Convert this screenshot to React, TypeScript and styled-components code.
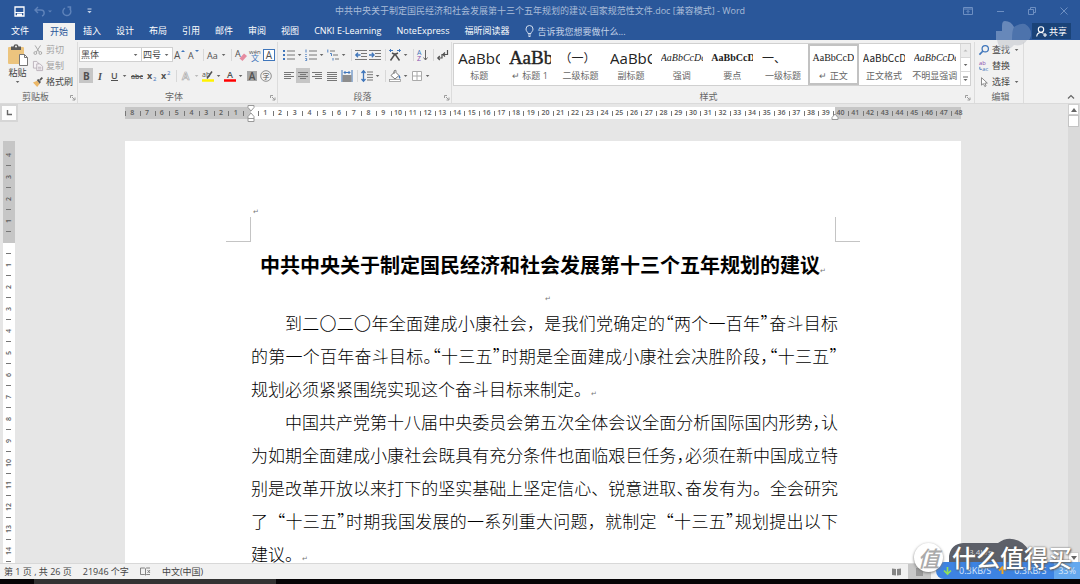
import React from "react";
import styled, { createGlobalStyle, css } from "styled-components";

const UI_FONT = `"Open Sans", "Noto Sans CJK SC", sans-serif`;
const BLUE = "#2a579a";
const INK = "#505050";

const GlobalStyle = createGlobalStyle`
  *, *::before, *::after { box-sizing: border-box; }
  html, body { margin: 0; height: 100%; }
  body { font-family: ${UI_FONT}; font-size: 9px; color: #444; background: #e6e6e6; overflow: hidden; }
  button, select, input { font: inherit; color: inherit; margin: 0; padding: 0; border: 0; background: none; border-radius: 0; }
  svg { display: block; flex: none; overflow: visible; }
`;

const Shell = styled.div`
  position: relative;
  display: flex;
  flex-direction: column;
  height: 100vh;
  overflow: hidden;
`;

/* ---------- title bar and tabs ---------- */

const TitleBar = styled.header`
  display: grid;
  grid-template-columns: 1fr auto 1fr;
  align-items: center;
  height: 22px;
  background: ${BLUE};
  color: #a9bcd8;
`;

const DocumentName = styled.div`
  font-size: 9px;
  line-height: 12px;
  white-space: nowrap;
`;

const QuickAccess = styled.div`
  display: flex;
  align-items: center;
  gap: 8px;
  padding-left: 12px;
`;

const WindowControls = styled.div`
  display: flex;
  justify-content: flex-end;
  gap: 18px;
  padding-right: 9px;
`;

const BarButton = styled.button`
  display: flex;
  align-items: center;
  justify-content: center;
  min-width: 14px;
  height: 14px;
`;

const TabBar = styled.nav`
  display: flex;
  align-items: stretch;
  height: 18px;
  gap: 1px;
  padding-right: 9px;
  background: ${BLUE};
  color: #fff;
`;

const Tab = styled.button<{ $active?: boolean; $file?: boolean }>`
  padding: 0 7px;
  white-space: nowrap;
  line-height: 16px;
  ${(p) => p.$file && css`width: 42px; padding: 0 12px 0 10px;`}
  ${(p) => p.$active && css`background: #f1f1f1; color: ${BLUE}; margin-top: 1px;`}
`;

const TellMe = styled.label`
  display: flex;
  align-items: center;
  gap: 3px;
  margin-left: 8px;
  color: #d3deee;
  input { width: 120px; height: 16px; outline: none; }
  input::placeholder { color: #c5d3e8; opacity: 1; }
`;

const ShareButton = styled.button`
  display: flex;
  align-items: center;
  gap: 2px;
  height: 16px;
  margin: 1px 0 0 auto;
  padding: 0 4px;
  background: #1a4378;
`;

/* ---------- ribbon ---------- */

const Ribbon = styled.section`
  display: flex;
  height: 64px;
  background: #f1f1f1;
  border-bottom: 1px solid #dadada;
`;

const Group = styled.div<{ $pad?: number }>`
  display: flex;
  flex-direction: column;
  margin-top: 2px;
  padding: 0 1px 0 ${(p) => p.$pad ?? 2}px;
  border-right: 1px solid #dcdcdc;
  min-width: 0;
`;

const StylesGroup = styled(Group)`
  flex: 0 1 523px;
  padding: 0 3px 0 1px;
`;

const GroupBody = styled.div`
  display: flex;
  flex: 1;
`;

const GroupCaption = styled.div`
  display: flex;
  align-items: center;
  height: 12px;
  color: #666;
  span { flex: 1; text-align: center; line-height: 12px; }
`;

const ToolRows = styled.div`
  display: flex;
  flex-direction: column;
  gap: 6px;
  padding-top: 5px;
`;

const ToolRow = styled.div`
  display: flex;
  align-items: center;
  height: 15px;
`;

const ToolButton = styled.button<{ $pressed?: boolean; $wide?: boolean }>`
  display: flex;
  align-items: center;
  justify-content: center;
  width: ${(p) => (p.$wide ? 16 : 14)}px;
  height: 15px;
  color: ${INK};
  background: ${(p) => (p.$pressed ? "#c6c6c6" : "transparent")};
`;

const SplitButton = styled(ToolButton)`
  width: 22px;
  justify-content: flex-start;
  > svg:first-child { margin: 0 1px; }
`;

const Divider = styled.i`
  width: 1px;
  height: 12px;
  margin: 0 2px 0 3px;
  background: #d8d8d8;
`;

const Combo = styled.label<{ $width: number }>`
  display: flex;
  align-items: center;
  width: ${(p) => p.$width}px;
  height: 15px;
  margin-right: -1px;
  padding-right: 2px;
  background: #fff;
  border: 1px solid #d0d0d0;
  select { flex: 1; min-width: 0; appearance: none; outline: none; padding-left: 1px; line-height: 12px; }
`;

const PasteButton = styled.button`
  display: flex;
  flex-direction: column;
  align-items: center;
  width: 31px;
  padding-top: 2px;
  gap: 1px;
  line-height: 12px;
`;

const CommandList = styled.div`
  display: flex;
  flex-direction: column;
  gap: 1px;
  width: 43px;
`;

const Command = styled.button<{ $muted?: boolean }>`
  display: flex;
  align-items: center;
  gap: 3px;
  height: 15px;
  white-space: nowrap;
  color: ${(p) => (p.$muted ? "#a3a3a3" : "#444")};
`;

const Gallery = styled.div`
  display: flex;
  flex: 1;
  min-width: 0;
  height: 43px;
  margin-top: 1px;
  background: #fff;
  border: 1px solid #d0d0d0;
`;

const GalleryGrid = styled.div`
  flex: 1;
  display: grid;
  grid-template-columns: repeat(10, minmax(0, 1fr));
`;

const StyleCard = styled.button<{ $active?: boolean }>`
  display: flex;
  flex-direction: column;
  align-items: center;
  min-width: 0;
  border: 2px solid ${(p) => (p.$active ? "#c2c2c2" : "transparent")};
`;

const sampleLooks = {
  title: css`font: 15px/24px "Open Sans", sans-serif;`,
  heading: css`font: 500 19px/24px "Liberation Serif", serif; -webkit-text-stroke: 0.4px #222;`,
  cjk: css`font: 12px/24px "Noto Sans CJK SC", sans-serif;`,
  emphasis: css`font: italic 10px/24px "Liberation Serif", serif;`,
  strong: css`font: bold 10px/24px "Liberation Serif", serif;`,
  body: css`font: 10px/24px "Liberation Serif", serif;`,
  format: css`font: 10px/24px "Noto Sans CJK SC", sans-serif;`,
};

const Sample = styled.span<{ $look: keyof typeof sampleLooks }>`
  width: 42px;
  height: 24px;
  overflow: hidden;
  white-space: nowrap;
  text-align: left;
  color: #222;
  ${(p) => sampleLooks[p.$look]}
`;

const StyleName = styled.span`
  line-height: 12px;
  white-space: nowrap;
  color: #666;
`;

const GallerySteps = styled.div`
  display: flex;
  flex-direction: column;
  width: 10px;
  border-left: 1px solid #d8d8d8;
  button { flex: 1; display: flex; align-items: center; justify-content: center; }
  button + button { border-top: 1px solid #d8d8d8; }
  button:first-child { background: #ececec; }
`;

const CollapseButton = styled.button`
  align-self: flex-end;
  margin: 0 5px 3px auto;
`;

/* ---------- document area ---------- */

const Workspace = styled.main`
  display: flex;
  flex: 1;
  min-height: 0;
  background: #e6e6e6;
`;

const Editor = styled.div`
  display: flex;
  flex-direction: column;
  flex: 1;
  min-width: 0;
`;

const RulerRow = styled.div`
  display: flex;
  height: 37px;
`;

const TabSelector = styled.button`
  display: flex;
  align-items: center;
  justify-content: center;
  width: 18px;
  height: 18px;
  background: #fdfdfd;
  border: 2px solid #d6d6d6;
`;

const RulerSlot = styled.div`
  flex: 1;
  display: flex;
  justify-content: center;
  padding-top: 3px;
`;

const HorizontalRuler = styled.div`
  position: relative;
  width: 836px;
  height: 12px;
  background: linear-gradient(to right, #c6c6c6 126px, #fff 126px, #fff 710px, #c6c6c6 710px);
`;

const RulerScale = styled.div`
  display: grid;
  grid-template-columns: repeat(57, minmax(0, 1fr));
  width: 841px;
`;

const RulerCell = styled.span`
  position: relative;
  height: 12px;
  font-size: 7px;
  font-weight: 600;
  line-height: 12px;
  text-align: center;
  color: #5c5c5c;
  background: linear-gradient(#777, #777) left center / 1px 5px no-repeat;
`;

const IndentMarker = styled.svg<{ $x: number; $y: number }>`
  position: absolute;
  left: ${(p) => p.$x}px;
  top: ${(p) => p.$y}px;
`;

const Canvas = styled.div`
  display: flex;
  flex: 1;
  min-height: 0;
  overflow: hidden;
`;

const VerticalRuler = styled.div`
  width: 12px;
  margin: 0 3px;
  padding-top: 3px;
  overflow: hidden;
  background: linear-gradient(#c6c6c6 102px, #fff 102px);
`;

const VerticalCell = styled(RulerCell)`
  display: block;
  width: 12px;
  height: 22px;
  writing-mode: vertical-rl;
  transform: rotate(180deg);
  background: linear-gradient(#777, #777) center top / 5px 1px no-repeat;
`;

const PageSlot = styled.div`
  flex: 1;
  display: flex;
  justify-content: center;
`;

const Page = styled.article`
  width: 836px;
  background: #fff;
  color: #000;
  font-family: "Noto Sans CJK SC", sans-serif;
`;

const PageTop = styled.div`
  display: grid;
  grid-template-columns: 126px 1fr 126px;
  align-items: end;
  height: 101px;
`;

const Corner = styled.i<{ $side: "left" | "right" }>`
  width: 25px;
  height: 25px;
  border-bottom: 1px solid #c4c4c4;
  ${(p) => (p.$side === "left" ? css`justify-self: end; border-right: 1px solid #c4c4c4;` : css`border-left: 1px solid #c4c4c4;`)}
`;

const HeaderText = styled.div`
  align-self: start;
  padding: 63px 0 0 2px;
`;

const Mark = styled.span`
  font: 7px/12px "DejaVu Sans", sans-serif;
  color: #777;
`;

const DocTitle = styled.h1`
  margin: 0;
  font-size: 20px;
  line-height: 46px;
  font-weight: 700;
  text-align: center;
  white-space: nowrap;
`;

const EmptyLine = styled.div`
  height: 18px;
  padding-left: 10px;
  text-align: center;
  line-height: 20px;
`;

const Paragraph = styled.p`
  width: 587px;
  margin: 0 0 0 126px;
  font-size: 17px;
  line-height: 33px;
  font-weight: 300;
`;

const Line = styled.span<{ $first?: boolean; $last?: boolean }>`
  display: block;
  height: 33px;
  padding-left: ${(p) => (p.$first ? 34 : 0)}px;
  text-align: justify;
  text-align-last: ${(p) => (p.$last ? "left" : "justify")};
`;

const Half = styled.span`
  font-feature-settings: "halt";
`;

const ScrollBar = styled.div`
  display: flex;
  flex-direction: column;
  width: 12px;
  padding-right: 1px;
  background: #dadada;
  button { display: flex; align-items: center; justify-content: center; width: 11px; height: 11px; background: #fff; border: 1px solid #cfcfcf; }
  button:last-child { margin-top: auto; }
`;

const Thumb = styled.div`
  height: 12px;
  background: #fff;
  border: 1px solid #c4c4c4;
`;

/* ---------- status bar ---------- */

const StatusBar = styled.footer`
  position: relative;
  display: flex;
  align-items: center;
  height: 16px;
  gap: 11px;
  padding-left: 4px;
  background: #f1f1f1;
  border-top: 1px solid #d8d8d8;
  white-space: nowrap;
`;

const ViewButtons = styled.div`
  display: flex;
  margin: 0 149px 0 auto;
`;

const ViewButton = styled.button<{ $active?: boolean }>`
  display: flex;
  align-items: center;
  justify-content: center;
  width: 23px;
  height: 15px;
  background: ${(p) => (p.$active ? "#c8c8c8" : "transparent")};
`;

const TaskBar = styled.div`
  height: 5px;
  padding: 0 0 0 34px;
  background: #060406;
  &::before { content: ""; display: block; width: 242px; height: 5px; background: #333; }
`;

/* ---------- overlays ---------- */

const CloudBadge = styled.svg`
  position: absolute;
  right: 48px;
  top: 20px;
`;

const SpeedBubble = styled.svg`
  position: absolute;
  right: 47px;
  bottom: 21px;
`;

const NetMeter = styled.aside`
  position: absolute;
  right: 0;
  bottom: 5px;
  display: flex;
  align-items: center;
  width: 144px;
  height: 17px;
  padding-left: 7px;
  gap: 7px;
  border-radius: 8px 0 0 8px;
  background: #3d83e2;
  color: #dbe9fb;
  overflow: hidden;
  b { margin-left: auto; width: 26px; line-height: 17px; text-align: center; font-weight: 400; background: #64a8ee; }
`;

const Watermark = styled.div`
  position: absolute;
  right: 8px;
  bottom: 10px;
  display: flex;
  align-items: center;
  gap: 9px;
  font: 500 24px/34px "Noto Sans CJK SC", sans-serif;
  color: #fff;
  text-shadow: 0 0 2px #555, 1px 1px 2px #666;
`;

const Seal = styled.span`
  display: flex;
  align-items: center;
  justify-content: center;
  width: 29px;
  height: 29px;
  border-radius: 50%;
  background: #fff;
  box-shadow: 0 1px 3px #777;
  color: #aaa;
  font-size: 22px;
  font-style: italic;
  text-shadow: none;
`;

/* ---------- drawings ---------- */

const Chevron = ({ color = "#666" }: { color?: string }) => (
  <svg width="7" height="4" viewBox="0 0 7 4"><path d="M1.8 1h3.6L3.6 3z" fill={color} /></svg>
);

const Launcher = () => (
  <svg width="7" height="7" viewBox="0 0 7 7" fill="none" stroke="#888"><path d="M1.5 4V1.5H4M3 3l2.5 2.5M6 3.5V6H3.5" strokeWidth=".8" /></svg>
);

type IconProps = { children: React.ReactNode; size?: number };
const Icon = ({ children, size = 12 }: IconProps) => (
  <svg width={size} height={size} viewBox="0 0 12 12" fill="none" stroke={INK} strokeWidth="1">{children}</svg>
);

const T = ({ x, y, s, fill = INK, children, ...rest }: any) => (
  <text x={x} y={y} fontSize={s} fill={fill} stroke="none" fontFamily={UI_FONT} {...rest}>{children}</text>
);

const lines = (rows: [number, number, number][], color = "#777") =>
  rows.map(([x, y, w]) => <path key={y} d={`M${x} ${y}h${w}`} stroke={color} />);

const PasteIcon = () => (
  <svg width="20" height="22" viewBox="0 0 20 22">
    <rect x="0" y="3" width="16" height="17" rx="1" fill="#ecc47e" />
    <path d="M3 2.5h2.5a2.5 2.2 0 0 1 5 0H13V6H3z" fill="#595959" />
    <circle cx="8" cy="2.5" r="1" fill="#f1f1f1" />
    <path d="M11.500 10.500h5l3 3v8h-8z" fill="#fff" stroke="#777" />
    <path d="M16.500 10.500v3h3" fill="none" stroke="#777" />
  </svg>
);

const ScissorsIcon = () => (
  <Icon size={10}><g stroke="#a9a9a9" strokeWidth="1.200"><path d="M2.500 0.500l5 8M9 0.500l-5 8" /><circle cx="2.800" cy="9.600" r="1.700" /><circle cx="8.800" cy="9.600" r="1.700" /></g></Icon>
);
const CopyIcon = () => (
  <Icon size={10}><g stroke="#b3a9b3" fill="#f4f1f4"><path d="M.5 .5h4l2 2v6h-6z" /><path d="M4.500 3.500h4l3 3v5h-7z" /><path d="M6 7.500h4M6 9.500h4" /></g></Icon>
);
const BrushIcon = () => (
  <Icon size={10}><g stroke="none"><path d="M0 6.500l5-2 3 3.500-3 4z" fill="#ecb766" /><path d="M4.500 3.500l2-1 3 3.500-1.500 2z" fill="#555" /><path d="M7.500 3l3-3 1.500 1.500-3 3z" fill="#555" /></g></Icon>
);

const BulletsIcon = () => <Icon><g fill="#3f76bb" stroke="none"><rect y="1" width="2" height="2" /><rect y="5" width="2" height="2" /><rect y="9" width="2" height="2" /></g>{lines([[4, 2, 8], [4, 6, 8], [4, 10, 8]])}</Icon>;
const NumberingIcon = () => <Icon><g stroke="#3f76bb"><path d="M1 .5v3M.3 5.500h1.400M.3 7.500h1.400M.3 9.500h1.400v2H.3" strokeWidth=".9" /></g>{lines([[4, 2, 8], [4, 6, 8], [4, 10, 8]])}</Icon>;
const MultiIcon = () => <Icon><g stroke="#3f76bb"><path d="M.8 .5v3M3 4.500h1.500v2.500M6 9v2.500" strokeWidth=".9" /></g>{lines([[3, 2, 5], [6, 6, 5], [8, 10, 4]])}</Icon>;
const IndentIcon = ({ out }: { out?: boolean }) => (
  <Icon>{lines([[0, 1.5, 12], [6, 4.5, 6], [6, 7.5, 6], [0, 10.5, 12]])}<path d={out ? "M5.500 6H1M3 3.800L.8 6 3 8.200" : "M0 6h4.500M2.800 3.800L5 6 2.800 8.200"} stroke="#3f76bb" strokeWidth="1.300" /></Icon>
);
const AsianIcon = () => <Icon><path d="M1.500 11.500L6 5l4.500 6.500M3 4l3 1.500L9 4" strokeWidth="1.500" /><path d="M.5 1.500h3.500M2 0L.5 1.500 2 3M11.500 1.500H8M10 0l1.500 1.500L10 3" stroke="#3f76bb" /></Icon>;
const SortIcon = () => <Icon><T x="0" y="5.500" s="7" fill="#3f76bb">A</T><T x="0" y="12" s="7" fill="#8a4fae">Z</T><path d="M8.500 1v10M6.500 8.500l2 2.500 2-2.500" stroke="#666" /></Icon>;
const ReturnIcon = () => <Icon><path d="M10.500 1v4.500H6M8 3.500L6 5.500l2 2M5 5v4H1M2.800 7L.8 9l2 2" strokeWidth="1.200" /></Icon>;
const AlignIcon = ({ kind }: { kind: "left" | "center" | "right" | "full" }) => {
  const x = { left: 1, center: 3, right: 4, full: 1 }[kind];
  const w = kind === "full" ? 10 : kind === "center" ? 6 : 7;
  return <Icon>{lines([[1, 2.5, 10], [x, 4.5, w], [1, 6.5, 10], [x, 8.5, w], [1, 10.5, kind === "full" ? 10 : 0]])}</Icon>;
};
const DistributeIcon = () => <Icon><path d="M1 0v12M11 0v12M3 2.500h6" stroke="#3f76bb" /><rect x="1.500" y="5" width="9" height="7" fill="#8d8d8d" stroke="none" /><path d="M4.500 1L3 2.500 4.500 4M7.500 1L9 2.500 7.500 4" stroke="#3f76bb" /></Icon>;
const SpacingIcon = () => <Icon>{lines([[6, 2, 6], [6, 4.7, 6], [6, 7.400, 6], [6, 10, 6]])}<path d="M2.500 .8v10.400M.5 3l2-2.200 2 2.200M.5 9l2 2.200 2-2.200" stroke="#3f76bb" strokeWidth="1.300" /></Icon>;
const ShadingIcon = () => <Icon><path d="M2 5.500L6 1.500l4 4-4 3.500z" fill="#fff" stroke="#777" /><path d="M5 4V1.500a1.200 1.200 0 0 1 2.400 0" stroke="#777" /><path d="M10 5c1.500 1.500 1.800 3 1 3.500S9.500 8 10 5z" fill="#3f76bb" stroke="none" /><rect x=".5" y="9.500" width="11" height="2" fill="#fff" stroke="#999" strokeWidth=".8" /></Icon>;
const BorderIcon = () => <Icon><path d="M1.500 1.500h9v9h-9zM6 1.500v9M1.500 6h9" stroke="#aaa" fill="#fff" /></Icon>;
const EraserIcon = () => <Icon><T x="0" y="8" s="9">A</T><path d="M4.500 9.500l4.500-5 3 2.500-4.500 5z" fill="#e58ba0" stroke="none" /></Icon>;
const PinyinIcon = () => <Icon><T x="0" y="4.500" s="6">wén</T><T x="2" y="11.500" s="8" fill="#3f76bb">文</T></Icon>;

const FontGrow = ({ down }: { down?: boolean }) => (
  <Icon><T x="1" y="10" s={down ? 9 : 10}>A</T><path d={down ? "M8 1h4l-2 2z" : "M8 3h4l-2-2z"} fill="#3f76bb" stroke="none" /></Icon>
);

const Drop = () => <Chevron />;

/* ---------- data ---------- */

const tabs = ["插入", "设计", "布局", "引用", "邮件", "审阅", "视图", "CNKI E-Learning", "NoteExpress", "福昕阅读器"];

const styleCards: { sample: string; name: string; look: keyof typeof sampleLooks; active?: boolean }[] = [
  { sample: "AaBbCc", name: "标题", look: "title" },
  { sample: "AaBbC", name: "↵ 标题 1", look: "heading" },
  { sample: "（一）", name: "二级标题", look: "cjk" },
  { sample: "AaBbCc", name: "副标题", look: "title" },
  { sample: "AaBbCcDd", name: "强调", look: "emphasis" },
  { sample: "AaBbCcDd", name: "要点", look: "strong" },
  { sample: "一、", name: "一级标题", look: "cjk" },
  { sample: "AaBbCcD", name: "↵ 正文", look: "body", active: true },
  { sample: "AaBbCcDd", name: "正文格式", look: "format" },
  { sample: "AaBbCcDd", name: "不明显强调", look: "emphasis" },
];

const horizontalMarks = [8, 7, 6, 5, 4, 3, 2, 1, 0, ...Array.from({ length: 48 }, (_, i) => i + 1)];
const verticalMarks = [4, 3, 2, 1, 0, ...Array.from({ length: 20 }, (_, i) => i + 1)];

/* ---------- sections ---------- */

const Caption = ({ children, launcher = true }: { children: string; launcher?: boolean }) => (
  <GroupCaption><span>{children}</span>{launcher && <button aria-label={children + "设置"}><Launcher /></button>}</GroupCaption>
);

const WindowTop = () => (
  <>
    <TitleBar>
      <QuickAccess>
        <BarButton aria-label="保存"><svg width="11" height="11" viewBox="0 0 11 11"><path d="M1 1h9v9H1z" fill="none" stroke="#fff" strokeWidth="1.300" /><path d="M1 6h9v1H1zM3 7.500h5V10H3z" fill="#fff" /></svg></BarButton>
        <BarButton aria-label="撤销"><svg width="18" height="11" viewBox="0 0 18 11" fill="none" stroke="#5f83ba" strokeWidth="1.400"><path d="M4 1L1 4l3 3M1 4h6c4 0 4 5 1 6" /><path d="M14 4.500h4l-2 2z" fill="#5f83ba" stroke="none" /></svg></BarButton>
        <BarButton aria-label="重复"><svg width="10" height="11" viewBox="0 0 10 11" fill="none" stroke="#5f83ba" strokeWidth="1.400"><path d="M3 2a4 4 0 1 0 4.500.5M5.500 1h3v3.500" /></svg></BarButton>
        <BarButton aria-label="自定义"><svg width="5" height="6" viewBox="0 0 5 6"><path d="M.5 1h4" stroke="#c5d3e8" /><path d="M.3 3h4.400L2.500 5.200z" fill="#c5d3e8" /></svg></BarButton>
      </QuickAccess>
      <DocumentName>中共中央关于制定国民经济和社会发展第十三个五年规划的建议-国家规范性文件.doc [兼容模式] - Word</DocumentName>
      <WindowControls>
        <BarButton aria-label="功能区"><svg width="10" height="8" viewBox="0 0 10 8" fill="none" stroke="#6d8fc2"><path d="M.5.5h9v7h-9zM.5 2h9M5 6.500V3.500M3.500 5L5 3.500 6.500 5" /></svg></BarButton>
        <BarButton aria-label="最小化"><svg width="8" height="8" viewBox="0 0 8 8"><path d="M1 4.500h7" stroke="#6d8fc2" /></svg></BarButton>
        <BarButton aria-label="还原"><svg width="8" height="8" viewBox="0 0 8 8" fill="none" stroke="#6d8fc2"><path d="M.5 2.500h5v5h-5zM2.500 2V.5h5v5H6" /></svg></BarButton>
        <BarButton aria-label="关闭"><svg width="8" height="8" viewBox="0 0 8 8"><path d="M.5.5l7 7M7.500.5l-7 7" stroke="#6d8fc2" /></svg></BarButton>
      </WindowControls>
    </TitleBar>
    <TabBar>
      <Tab $file>文件</Tab>
      <Tab $active>开始</Tab>
      {tabs.map((t) => <Tab key={t}>{t}</Tab>)}
      <TellMe>
        <svg width="9" height="12" viewBox="0 0 9 12" fill="none" stroke="#d3deee"><path d="M3 8.500C3 7 1 6.500 1 4a3.500 3.500 0 0 1 7 0C8 6.500 6 7 6 8.500zM3 10h3M3.500 11.500h2" /></svg>
        <input aria-label="操作说明搜索" placeholder="告诉我您想要做什么..." />
      </TellMe>
      <ShareButton>
        <svg width="11" height="11" viewBox="0 0 11 11" fill="none" stroke="#fff" strokeWidth="1.100"><circle cx="5" cy="3.500" r="2.700" /><path d="M.7 10.500c.3-3 2-4 4.300-4 1 0 2 .3 2.500 1M7 9h4M9 7v4" /></svg>
        共享
      </ShareButton>
    </TabBar>
  </>
);

const FontTools = () => (
  <ToolRows>
    <ToolRow>
      <Combo $width={63}><select aria-label="字体"><option>黑体</option></select><Drop /></Combo>
      <Combo $width={32}><select aria-label="字号"><option>四号</option></select><Drop /></Combo>
      <ToolButton aria-label="增大字号"><FontGrow /></ToolButton>
      <ToolButton aria-label="减小字号"><FontGrow down /></ToolButton>
      <Divider />
      <SplitButton aria-label="更改大小写"><Icon><T x="0" y="10" s="9">Aa</T></Icon><Drop /></SplitButton>
      <Divider />
      <ToolButton aria-label="清除格式"><EraserIcon /></ToolButton>
      <ToolButton aria-label="拼音指南"><PinyinIcon /></ToolButton>
      <ToolButton aria-label="字符边框"><Icon><rect x=".5" y=".5" width="11" height="11" stroke="#3f76bb" fill="#fff" /><T x="2.700" y="9.500" s="10">A</T></Icon></ToolButton>
    </ToolRow>
    <ToolRow>
      <ToolButton $pressed aria-label="加粗"><Icon><T x="3" y="9.500" s="10" fontWeight="700">B</T></Icon></ToolButton>
      <ToolButton aria-label="倾斜"><Icon><T x="4" y="9.500" s="10" fontWeight="700" fontStyle="italic" fontFamily="Liberation Serif">I</T></Icon></ToolButton>
      <SplitButton aria-label="下划线"><Icon><T x="3" y="9" s="9" fontWeight="600">U</T><path d="M3 10.500h7" /></Icon><Drop /></SplitButton>
      <ToolButton $wide aria-label="删除线"><Icon><T x="0" y="9" s="7" fontWeight="600">abc</T><path d="M0 6.500h12" /></Icon></ToolButton>
      <ToolButton aria-label="下标"><Icon><T x="1" y="9" s="9" fontWeight="700">x</T><T x="7" y="11" s="6" fill="#3f76bb">2</T></Icon></ToolButton>
      <ToolButton aria-label="上标"><Icon><T x="1" y="9" s="9" fontWeight="700">x</T><T x="7" y="5" s="6" fill="#3f76bb">2</T></Icon></ToolButton>
      <Divider />
      <SplitButton aria-label="文本效果"><Icon><text x="2" y="10" fontSize="11" fontWeight="600" fill="#fff" stroke="#aaa" strokeWidth=".7" fontFamily={UI_FONT}>A</text></Icon><Chevron color="#bbb" /></SplitButton>
      <SplitButton aria-label="突出显示"><Icon><T x="0" y="7" s="7">ab</T><path d="M5 8.500l5-7" strokeWidth="1.500" /><path d="M0 10.500h12" stroke="#fff200" strokeWidth="2.500" /></Icon><Drop /></SplitButton>
      <SplitButton aria-label="字体颜色"><Icon><T x="3" y="8" s="9" fontWeight="600">A</T><path d="M0 10.500h12" stroke="#f00" strokeWidth="2.500" /></Icon><Drop /></SplitButton>
      <ToolButton aria-label="字符底纹"><Icon><rect x="1" y="1" width="10" height="10" fill="#a6a6a6" stroke="none" /><T x="2.800" y="9.500" s="10" fontWeight="600">A</T></Icon></ToolButton>
      <ToolButton aria-label="带圈字符"><Icon><circle cx="6" cy="6" r="5.300" stroke="#777" strokeWidth=".8" /><T x="2.500" y="8.700" s="7">字</T></Icon></ToolButton>
    </ToolRow>
  </ToolRows>
);

const ParagraphTools = () => (
  <ToolRows>
    <ToolRow>
      <SplitButton aria-label="项目符号"><BulletsIcon /><Drop /></SplitButton>
      <SplitButton aria-label="编号"><NumberingIcon /><Drop /></SplitButton>
      <SplitButton aria-label="多级列表"><MultiIcon /><Drop /></SplitButton>
      <Divider />
      <ToolButton aria-label="减少缩进"><IndentIcon out /></ToolButton>
      <ToolButton aria-label="增加缩进"><IndentIcon /></ToolButton>
      <Divider />
      <SplitButton aria-label="中文版式"><AsianIcon /><Drop /></SplitButton>
      <Divider />
      <ToolButton aria-label="排序"><SortIcon /></ToolButton>
      <Divider />
      <ToolButton aria-label="显示标记"><ReturnIcon /></ToolButton>
    </ToolRow>
    <ToolRow>
      <ToolButton aria-label="左对齐"><AlignIcon kind="left" /></ToolButton>
      <ToolButton $pressed aria-label="居中"><AlignIcon kind="center" /></ToolButton>
      <ToolButton aria-label="右对齐"><AlignIcon kind="right" /></ToolButton>
      <ToolButton $wide aria-label="两端对齐"><AlignIcon kind="full" /></ToolButton>
      <ToolButton aria-label="分散对齐"><DistributeIcon /></ToolButton>
      <Divider />
      <SplitButton aria-label="行距"><SpacingIcon /><Drop /></SplitButton>
      <Divider />
      <SplitButton aria-label="底纹"><ShadingIcon /><Drop /></SplitButton>
      <SplitButton aria-label="边框"><BorderIcon /><Drop /></SplitButton>
    </ToolRow>
  </ToolRows>
);

const RibbonBar = () => (
  <Ribbon>
    <Group>
      <GroupBody>
        <PasteButton><PasteIcon /><span>粘贴</span><Chevron /></PasteButton>
        <CommandList>
          <Command $muted><ScissorsIcon />剪切</Command>
          <Command $muted><CopyIcon />复制</Command>
          <Command><BrushIcon />格式刷</Command>
        </CommandList>
      </GroupBody>
      <Caption>剪贴板</Caption>
    </Group>
    <Group $pad={1}>
      <GroupBody><FontTools /></GroupBody>
      <Caption>字体</Caption>
    </Group>
    <Group $pad={4}>
      <GroupBody><ParagraphTools /></GroupBody>
      <Caption>段落</Caption>
    </Group>
    <StylesGroup>
      <GroupBody>
        <Gallery>
          <GalleryGrid>
            {styleCards.map((c) => (
              <StyleCard key={c.name} $active={c.active}>
                <Sample $look={c.look}>{c.sample}</Sample>
                <StyleName>{c.name}</StyleName>
              </StyleCard>
            ))}
          </GalleryGrid>
          <GallerySteps>
            <button aria-label="上一行"><svg width="5" height="3" viewBox="0 0 5 3"><path d="M.5 2.500h4L2.500.5z" fill="#bbb" /></svg></button>
            <button aria-label="下一行"><Chevron /></button>
            <button aria-label="更多样式"><svg width="5" height="6" viewBox="0 0 5 6"><path d="M0 1h5" stroke="#666" /><path d="M.5 3h4l-2 2z" fill="#666" /></svg></button>
          </GallerySteps>
        </Gallery>
      </GroupBody>
      <Caption>样式</Caption>
    </StylesGroup>
    <Group $pad={4}>
      <GroupBody>
        <CommandList>
          <Command><Icon size={10}><circle cx="7.500" cy="4.500" r="3.800" stroke="#3f76bb" strokeWidth="1.500" /><path d="M4.500 7.500L.5 11.500" stroke="#3f76bb" strokeWidth="2" /></Icon>查找<Chevron /></Command>
          <Command><Icon size={10}><T x="0" y="5" s="7" fill="#8a4fae">ab</T><T x="4" y="12" s="7" fill="#3f76bb">ac</T><path d="M1 7v3h2.500" stroke="#3f76bb" /></Icon>替换</Command>
          <Command><Icon size={10}><path d="M3 .8v9l2.200-2L7 11.500l1.500-.8L7 7.300h3z" fill="#fff" stroke="#777" /></Icon>选择<Chevron /></Command>
        </CommandList>
      </GroupBody>
      <Caption launcher={false}>编辑</Caption>
    </Group>
    <CollapseButton aria-label="折叠功能区"><svg width="8" height="6" viewBox="0 0 8 6"><path d="M1 4.500l3-3 3 3" fill="none" stroke="#666" strokeWidth="1.200" /></svg></CollapseButton>
  </Ribbon>
);

const DocumentPage = () => (
  <Page lang="zh-CN">
    <PageTop>
      <Corner $side="left" />
      <HeaderText><Mark>↵</Mark></HeaderText>
      <Corner $side="right" />
    </PageTop>
    <DocTitle>中共中央关于制定国民经济和社会发展第十三个五年规划的建议<Mark>↵</Mark></DocTitle>
    <EmptyLine><Mark>↵</Mark></EmptyLine>
    <Paragraph>
      <Line $first>到二〇二〇年全面建成小康社会，是我们党确定的<Half>“</Half>两个一百年<Half>”</Half>奋斗目标</Line>
      <Line>的第一个百年奋斗目标<Half>。“</Half>十三五<Half>”</Half>时期是全面建成小康社会决胜阶段<Half>，“</Half>十三五<Half>”</Half></Line>
      <Line $last>规划必须紧紧围绕实现这个奋斗目标来制定。<Mark>↵</Mark></Line>
    </Paragraph>
    <Paragraph>
      <Line $first>中国共产党第十八届中央委员会第五次全体会议全面分析国际国内形势<Half>，</Half>认</Line>
      <Line>为如期全面建成小康社会既具有充分条件也面临艰巨任务<Half>，</Half>必须在新中国成立特</Line>
      <Line>别是改革开放以来打下的坚实基础上坚定信心、锐意进取<Half>、</Half>奋发有为。全会研究</Line>
      <Line>了“十三五<Half>”</Half>时期我国发展的一系列重大问题，就制定“十三五<Half>”</Half>规划提出以下</Line>
      <Line $last>建议。<Mark>↵</Mark></Line>
    </Paragraph>
  </Page>
);

export default function App() {
  return (
    <Shell lang="zh-CN">
      <GlobalStyle />
      <WindowTop />
      <RibbonBar />
      <Workspace>
        <Editor>
          <RulerRow>
            <TabSelector aria-label="制表符"><svg width="6" height="6" viewBox="0 0 6 6"><path d="M1.500 0v4.500H6" fill="none" stroke="#666" strokeWidth="1.400" /></svg></TabSelector>
            <RulerSlot>
              <HorizontalRuler>
                <RulerScale>{horizontalMarks.map((n, i) => <RulerCell key={i}>{n || ""}</RulerCell>)}</RulerScale>
                <IndentMarker $x={122} $y={-2} width="8" height="18" viewBox="0 0 8 18" fill="#fff" stroke="#999"><path d="M1 .5h6v2L4 6 1 2.500zM4 8l3 3.500v5H1v-5zM1 13.500h6" /></IndentMarker>
                <IndentMarker $x={706} $y={6} width="8" height="8" viewBox="0 0 8 8" fill="#fff" stroke="#999"><path d="M4 1l3 3.500v2H1v-2z" /></IndentMarker>
              </HorizontalRuler>
            </RulerSlot>
          </RulerRow>
          <Canvas>
            <VerticalRuler>{verticalMarks.map((n, i) => <VerticalCell key={i}>{n || ""}</VerticalCell>)}</VerticalRuler>
            <PageSlot><DocumentPage /></PageSlot>
          </Canvas>
        </Editor>
        <ScrollBar>
          <button aria-label="向上滚动"><svg width="6" height="4" viewBox="0 0 6 4"><path d="M0 4h6L3 0z" fill="#666" /></svg></button>
          <Thumb />
          <button aria-label="向下滚动"><svg width="6" height="4" viewBox="0 0 6 4"><path d="M0 0h6L3 4z" fill="#666" /></svg></button>
        </ScrollBar>
      </Workspace>
      <StatusBar>
        <span>第 1 页 , 共 26 页</span>
        <span>21946 个字</span>
        <svg width="11" height="9" viewBox="0 0 11 9" fill="none" stroke="#777"><path d="M.5 1h4l1 .8V8L4.500 7.500h-4zM5.500 1.800l1-.8H10M5.500 8l1-.5H10M7.500 3l2.500 3M10 3L7.500 6" strokeWidth=".9" /></svg>
        <span>中文(中国)</span>
        <ViewButtons>
          <ViewButton aria-label="阅读视图"><svg width="9" height="8" viewBox="0 0 9 8"><path d="M0 .5l4 .5v6.500L0 7zM9 .5L5 1v6.500L9 7z" fill="#858585" /></svg></ViewButton>
          <ViewButton $active aria-label="页面视图"><svg width="9" height="8" viewBox="0 0 9 8"><path d="M1 0h7v8H1z" fill="#999" /></svg></ViewButton>
        </ViewButtons>
      </StatusBar>
      <TaskBar />
      <CloudBadge width="36" height="31" viewBox="0 0 36 31">
        <g fill="#b9c9e2" fillOpacity=".25">
          <path d="M6 6Q6 1 9 1q6 0 9 6 6-4 11-3 7 4 6 12-1 3-2 4H0v-9h6z" />
          <path d="M6 6Q6 1 9 1q6 0 9 6-2 3-2 13H0v-9h6z" />
        </g>
        <path d="M1 20h30q-4 7-13 5-4 5-10 5-5 0-7-10z" fill="#c4c8cf" fillOpacity=".6" />
      </CloudBadge>
      <SpeedBubble width="84" height="25" viewBox="0 0 84 25">
        <path d="M0 25V18Q2 6 14 5h35a20 20 0 0 1 32 14v6z" fill="#5d6069" />
        <path d="M9 19v-7M7 14l2-3 2 3" stroke="#f49a28" fill="none" strokeWidth="1.500" />
        <text x="20" y="17" fontSize="8" fill="#ddd">3.4K/s</text>
      </SpeedBubble>
      <NetMeter>
        <svg width="9" height="9" viewBox="0 0 9 9" fill="none" stroke="#8fe05a" strokeWidth="1.700"><path d="M4.500 1v7M1 4.500L4.500 8 8 4.500" /></svg>
        <span>0.3KB/S</span>
        <svg width="9" height="9" viewBox="0 0 9 9" fill="none" stroke="#f7a81f" strokeWidth="1.900"><path d="M4.500 8V1M1 4.500L4.500 1 8 4.500" /></svg>
        <span>0.3KB/S</span>
        <b>33%</b>
      </NetMeter>
      <Watermark><Seal>值</Seal>什么值得买</Watermark>
    </Shell>
  );
}
